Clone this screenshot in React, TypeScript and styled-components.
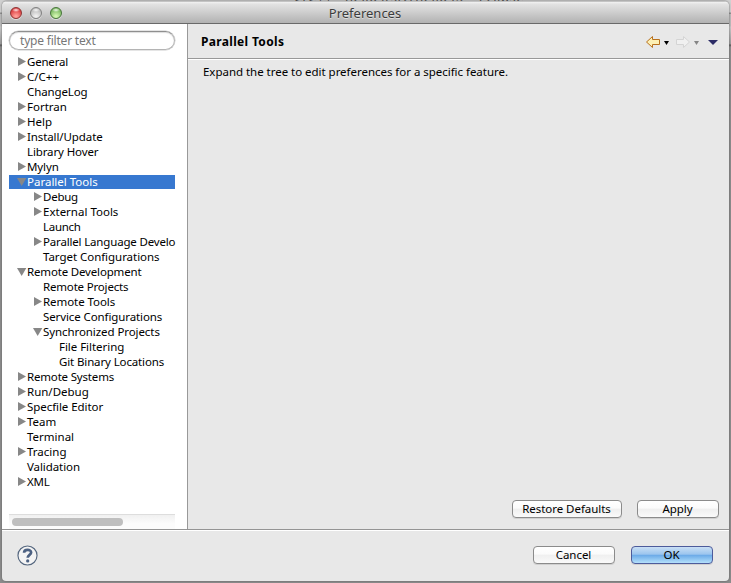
import React from 'react';
import styled, { createGlobalStyle, css } from 'styled-components';

const Global = createGlobalStyle`
  * { box-sizing: border-box; }
  html, body { margin: 0; padding: 0; overflow: hidden; }
  body { font-family: "Noto Sans", "Open Sans", sans-serif; font-size: 11.5px; color: #000; }
`;

const Desktop = styled.div`
  position: relative;
  width: 731px;
  height: 583px;
  padding: 1px 2px 2px 2px;
  overflow: hidden;
  background:
    linear-gradient(#d0d0d0 0 12px, #8e8e8e 13px 14px, #bcbcbc 14px 26px, #c9c9c9 27px, #9a9a9a 44px, #555 45px, #8c8c8c 47px, #8c8c8c 100%);
`;

const BehindTitle = styled.div`
  position: absolute;
  top: -10px;
  left: 294px;
  font-size: 13px;
  line-height: 14px;
  letter-spacing: 0.5px;
  color: #444;
  white-space: nowrap;
`;

const Window = styled.div`
  position: relative;
  display: flex;
  flex-direction: column;
  width: 727px;
  height: 580px;
  border-radius: 5px 5px 4px 4px;
  overflow: hidden;
  background: #e8e8e8;
  box-shadow: 0 0 2px #555;
`;

const TitleBar = styled.div`
  display: grid;
  grid-template-columns: 1fr auto 1fr;
  align-items: center;
  flex: none;
  height: 23px;
  padding: 1px 9px 0 8px;
  background: linear-gradient(#c4c4c4 0 1px, #f2f2f2 1px, #e3e3e3 3px, #b2b2b2 100%);
  border-bottom: 1px solid #696969;
`;

const Lights = styled.div`
  display: flex;
  gap: 8px;
`;

const Light = styled.span<{ $edge: string; $mid: string; $low: string }>`
  width: 12px;
  height: 12px;
  border-radius: 50%;
  border: 1px solid ${p => p.$edge};
  background:
    radial-gradient(ellipse 4px 2px at 50% 20%, rgba(255,255,255,.9), rgba(255,255,255,0)),
    radial-gradient(circle at 50% 85%, ${p => p.$low} 10%, ${p => p.$mid} 75%);
  box-shadow: 0 1px 0 rgba(255,255,255,.5);
`;

const Title = styled.span`
  font-size: 13px;
  line-height: 18px;
  color: #3c3c3c;
  text-shadow: 0 1px 0 rgba(255,255,255,.5);
`;

const Body = styled.div`
  display: flex;
  height: 505px;
  flex: none;
`;

const Sidebar = styled.div`
  display: flex;
  flex-direction: column;
  width: 186px;
  padding: 7px 12px 0 7px;
  background: #fff;
  border-right: 1px solid #999;
`;

const Search = styled.div`
  flex: none;
  height: 19px;
  padding-left: 10px;
  border: 1px solid #b4b4b4;
  border-top-color: #8f8f8f;
  border-radius: 10px;
  box-shadow: inset 0 1px 1px #ddd, 0 0 0 .5px #ccc;
  font-size: 12px;
  line-height: 18px;
  letter-spacing: -0.2px;
  color: #777;
`;

const Tree = styled.div`
  flex: 1;
  padding-top: 5px;
`;

const Row = styled.div<{ $level: number; $selected?: boolean }>`
  display: flex;
  height: 14px;
  margin-bottom: 1px;
  padding-left: ${p => 8 + p.$level * 16}px;
  white-space: nowrap;
  line-height: 14px;
  ${p => p.$selected && css`background: #3778d0; color: #fff;`}
`;

const Twisty = styled.svg`
  flex: none;
  width: 10px;
  height: 14px;
  fill: #878787;
`;

const Label = styled.span<{ $space: number }>`
  letter-spacing: ${p => p.$space}px;
`;

const ScrollTrack = styled.div`
  flex: none;
  height: 15px;
  padding: 3px 0 0 3px;
  border-top: 1px solid #ddd;
  background: linear-gradient(#f0f0f0, #fcfcfc 60%);
`;

const ScrollThumb = styled.div`
  width: 111px;
  height: 8px;
  border-radius: 4px;
  background: #bfbfbf;
`;

const Main = styled.div`
  display: flex;
  flex-direction: column;
  flex: 1;
`;

const Header = styled.div`
  display: flex;
  justify-content: space-between;
  height: 36px;
  flex: none;
  padding: 8px 10px 0 13px;
  border-bottom: 1px solid #fff;
  box-shadow: inset 0 -1px 0 #989898;
`;

const Heading = styled.span`
  font-size: 12px;
  line-height: 20px;
  font-weight: 700;
  letter-spacing: 0.33px;
`;

const NavIcons = styled.svg`
  margin-top: 3px;
  width: 74px;
  height: 14px;
`;

const Description = styled.div`
  flex: 1;
  padding: 4px 15px;
  line-height: 16px;
  letter-spacing: -0.03px;
`;

const ButtonBar = styled.div<{ $gap: number; $right: number }>`
  display: flex;
  justify-content: flex-end;
  gap: ${p => p.$gap}px;
  padding-right: ${p => p.$right}px;
`;

const PageButtons = styled(ButtonBar)`
  height: 29px;
`;

const FooterButtons = styled(ButtonBar)`
  padding-top: 1px;
`;

const Button = styled.button<{ $w: number; $primary?: boolean }>`
  width: ${p => p.$w}px;
  height: 18px;
  padding: 0 1px 2px 0;
  border: 1px solid #8b8b8b;
  border-radius: 4px;
  background: linear-gradient(#fff 0, #fbfbfb 45%, #efefef 50%, #fafafa 100%);
  box-shadow: 0 1px 0 #d0d0d0;
  font: inherit;
  line-height: 15px;
  letter-spacing: -0.05px;
  color: #000;
  ${p => p.$primary && css`
    border-color: #4d5b9b;
    background: linear-gradient(#c9dff5 0, #9cc5ee 45%, #6cabe8 52%, #b4e0fb 100%);
  `}
`;

const Footer = styled.div`
  display: flex;
  justify-content: space-between;
  flex: 1;
  padding: 15px 0 0 15px;
  border-top: 1px solid #949494;
  box-shadow: inset 0 1px 0 #fff;
`;

const HelpIcon = styled.svg`
  width: 21px;
  height: 21px;
`;

type Item = [label: string, level: number, state: '' | 'closed' | 'open', space?: number];

const items: Item[] = [
  ['General', 0, 'closed', -0.2],
  ['C/C++', 0, 'closed', 0],
  ['ChangeLog', 0, '', -0.12],
  ['Fortran', 0, 'closed'],
  ['Help', 0, 'closed'],
  ['Install/Update', 0, 'closed', -0.1],
  ['Library Hover', 0, '', -0.12],
  ['Mylyn', 0, 'closed', -0.1],
  ['Parallel Tools', 0, 'open', 0],
  ['Debug', 1, 'closed', -0.25],
  ['External Tools', 1, 'closed', 0],
  ['Launch', 1, '', -0.3],
  ['Parallel Language Develo', 1, 'closed', -0.17],
  ['Target Configurations', 1, '', -0.04],
  ['Remote Development', 0, 'open', -0.17],
  ['Remote Projects', 1, '', -0.18],
  ['Remote Tools', 1, 'closed', -0.07],
  ['Service Configurations', 1, '', -0.1],
  ['Synchronized Projects', 1, 'open', -0.08],
  ['File Filtering', 2, '', -0.04],
  ['Git Binary Locations', 2, '', -0.13],
  ['Remote Systems', 0, 'closed', -0.18],
  ['Run/Debug', 0, 'closed', 0],
  ['Specfile Editor', 0, 'closed', -0.06],
  ['Team', 0, 'closed'],
  ['Terminal', 0, ''],
  ['Tracing', 0, 'closed'],
  ['Validation', 0, '', -0.08],
  ['XML', 0, 'closed', -0.2],
];

export default function App() {
  return (
    <>
      <Global />
      <Desktop>
        <BehindTitle>C/C++ - hello4/src/hello4.c - Eclipse</BehindTitle>
        <Window>
          <TitleBar>
            <Lights>
              <Light $edge="#8e3433" $mid="#d9383b" $low="#ff9c96" />
              <Light $edge="#808080" $mid="#b9b9b9" $low="#eeeeee" />
              <Light $edge="#47753a" $mid="#76b55c" $low="#d0f5ae" />
            </Lights>
            <Title>Preferences</Title>
          </TitleBar>
          <Body>
            <Sidebar>
              <Search>type filter text</Search>
              <Tree>
                {items.map(([label, level, state, space = 0]) => (
                  <Row key={label} $level={level} $selected={label === 'Parallel Tools'}>
                    <Twisty viewBox="0 0 10 14">
                      {state === 'closed' && <path d="M1 2 9 6.5 1 11Z" />}
                      {state === 'open' && <path d="M0 3H9.3L4.7 11Z" />}
                    </Twisty>
                    <Label $space={space}>{label}</Label>
                  </Row>
                ))}
              </Tree>
              <ScrollTrack><ScrollThumb /></ScrollTrack>
            </Sidebar>
            <Main>
              <Header>
                <Heading>Parallel Tools</Heading>
                <NavIcons viewBox="0 0 74 14">
                  <path d="M1.5 7 7.5 1.5V4.5H14.5V9.5H7.5V12.5Z" fill="#fdf0b4" stroke="#b8701c" />
                  <path d="M19 6H24L21.5 10Z" fill="#000" />
                  <path d="M44.5 7 38.5 1.5V4.5H31.5V9.5H38.5V12.5Z" fill="#f0f0f0" stroke="#d4d4d4" />
                  <path d="M49 6H54L51.5 10Z" fill="#858585" />
                  <path d="M63 5H73L68 10Z" fill="#2c2c66" />
                </NavIcons>
              </Header>
              <Description>Expand the tree to edit preferences for a specific feature.</Description>
              <PageButtons $gap={15} $right={10}>
                <Button $w={110}>Restore Defaults</Button>
                <Button $w={82}>Apply</Button>
              </PageButtons>
            </Main>
          </Body>
          <Footer>
            <HelpIcon viewBox="0 0 22 22">
              <circle cx="11" cy="11" r="10" fill="#f4f4f4" stroke="#55677f" strokeWidth="1.2" />
              <path d="M7.4 8.2C7.4 4 14.8 4.1 14.8 7.9 14.8 10.4 11.2 10.4 11.2 13.4" fill="none" stroke="#4d6283" strokeWidth="2.8" />
              <circle cx="11.2" cy="16.7" r="1.7" fill="#4d6283" />
            </HelpIcon>
            <FooterButtons $gap={16} $right={16}>
              <Button $w={82}>Cancel</Button>
              <Button $w={82} $primary>OK</Button>
            </FooterButtons>
          </Footer>
        </Window>
      </Desktop>
    </>
  );
}
